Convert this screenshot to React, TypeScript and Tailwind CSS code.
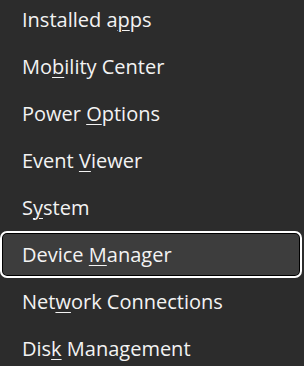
import React from "react";

const items: { pre: string; key: string; post: string; active?: boolean }[] = [
  { pre: "Installed a", key: "p", post: "ps" },
  { pre: "Mo", key: "b", post: "ility Center" },
  { pre: "Power ", key: "O", post: "ptions" },
  { pre: "Event ", key: "V", post: "iewer" },
  { pre: "S", key: "y", post: "stem" },
  { pre: "Device ", key: "M", post: "anager", active: true },
  { pre: "Net", key: "w", post: "ork Connections" },
  { pre: "Dis", key: "k", post: " Management" },
];

const App: React.FC = () => {
  return (
    <div
      className="w-[304px] h-[366px] overflow-hidden bg-[#2c2c2c] text-[#f3f3f3]"
      style={{ fontFamily: '"Open Sans", "Noto Sans", sans-serif' }}
    >
      <div className="mt-[-4px] flex flex-col">
        {items.map((it) =>
          it.active ? (
            <div
              key={it.pre + it.post}
              className="h-[47px] mr-[2px] flex items-center pl-[20px] text-[20px] leading-none border-2 border-white rounded-[7px] shadow-[inset_0_0_0_1px_#000] bg-[#3d3d3d]"
            >
              <span className="pt-[1px]">
                {it.pre}
                <u className="underline-offset-[3px] decoration-1">{it.key}</u>
                {it.post}
              </span>
            </div>
          ) : (
            <div
              key={it.pre + it.post}
              className="h-[47px] flex items-center pl-[22px] text-[20px] leading-none"
            >
              <span>
                {it.pre}
                <u className="underline-offset-[3px] decoration-1">{it.key}</u>
                {it.post}
              </span>
            </div>
          )
        )}
      </div>
    </div>
  );
};

export default App;
